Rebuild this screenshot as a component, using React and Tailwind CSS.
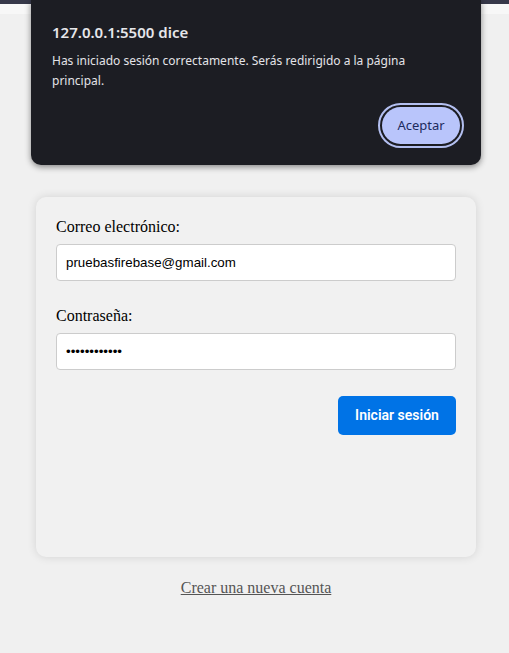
export default function App() {
  return (
    <div className="relative min-h-screen bg-[#f0f0f0]">
      <div className="h-[4px] bg-[#363849]" />
      <div className="h-[10px] bg-[#f7f7f7]" />

      <div className="flex flex-col items-center pl-[3px] pt-[183px]">
        <form
          className="flex h-[360px] w-[440px] flex-col rounded-[10px] bg-[#f1f1f1] px-5 pt-[21px] shadow-[0_0_10px_rgba(0,0,0,0.12)]"
          style={{ fontFamily: '"Liberation Serif", serif' }}
          onSubmit={(e) => e.preventDefault()}
        >
          <label className="text-[16px] leading-[18px] text-black">Correo electrónico:</label>
          <input
            type="email"
            defaultValue="pruebasfirebase@gmail.com"
            className="mt-[8px] h-[37px] w-full rounded-[4px] border border-[#cccccc] bg-white px-[9px] text-[13.33px] text-black outline-none"
            style={{ fontFamily: '"Liberation Sans", Arial, sans-serif' }}
          />
          <label className="mt-[26px] text-[16px] leading-[18px] text-black">Contraseña:</label>
          <input
            type="password"
            defaultValue="pruebas12345"
            className="mt-[8px] h-[37px] w-full rounded-[4px] border border-[#cccccc] bg-white px-[9px] text-[13.33px] text-black outline-none"
            style={{ fontFamily: '"Liberation Sans", Arial, sans-serif' }}
          />
          <div className="mt-[26px] flex justify-end">
            <button
              type="submit"
              className="h-[39px] w-[118px] rounded-[5px] bg-[#0073e6] text-[14px] font-semibold text-white"
              style={{ fontFamily: 'Roboto, "Liberation Sans", sans-serif' }}
            >
              Iniciar sesión
            </button>
          </div>
        </form>

        <a
          href="#"
          className="mt-[19px] text-[16px] text-[#555555] underline"
          style={{ fontFamily: '"Liberation Serif", serif' }}
        >
          Crear una nueva cuenta
        </a>
      </div>

      <div
        className="absolute left-[31px] top-0 h-[165px] w-[450px] rounded-b-[10px] bg-[#1c1d23] shadow-[0_2px_6px_rgba(0,0,0,0.45)]"
        style={{ fontFamily: '"Noto Sans", "Open Sans", sans-serif' }}
      >
        <div className="px-[21px] pt-[21px]">
          <h2 className="text-[15px] font-semibold leading-[22px] text-[#e6e6ea]">127.0.0.1:5500 dice</h2>
          <p className="mt-[8px] text-[12px] leading-[20px] text-[#e3e3e8]">
            Has iniciado sesión correctamente. Serás redirigido a la página principal.
          </p>
        </div>
        <div className="absolute right-[17px] top-[103px] rounded-full border-2 border-[#b3bff0] p-[2px]">
          <button className="h-[37px] w-[78px] rounded-full bg-[#b9c5fb] text-[13px] text-[#1d2b5e]">
            Aceptar
          </button>
        </div>
      </div>
    </div>
  );
}
